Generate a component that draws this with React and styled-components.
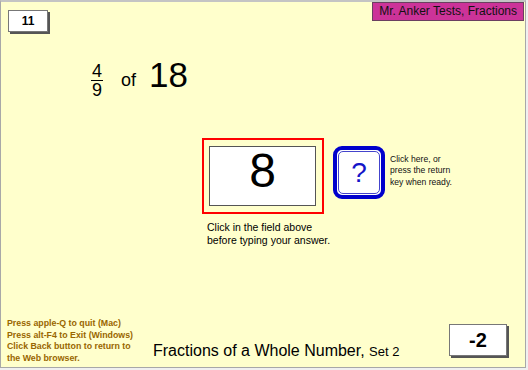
import React from "react";
import styled, { createGlobalStyle } from "styled-components";

const Global = createGlobalStyle`
  html, body { margin: 0; padding: 0; background: #f0f0f0; }
  body { font-family: "Liberation Sans", Arial, sans-serif; }
  * { box-sizing: border-box; }
`;

const Frame = styled.div`
  width: 526px;
  height: 368px;
  background: #ffffcc;
  border: 1px solid #a8a8a8;
  border-top: 2px solid #c4c4c4;
  display: flex;
  flex-direction: column;
  color: #000;
`;

const TopRow = styled.div`
  display: flex;
  justify-content: space-between;
  align-items: flex-start;
`;

const ScoreBox = styled.div`
  width: ${(p) => p.$w}px;
  height: ${(p) => p.$h}px;
  margin: ${(p) => p.$m};
  background: #fff;
  border: 1px solid #777;
  box-shadow: 2px 2px 0 #555;
  display: flex;
  align-items: center;
  justify-content: center;
  font-weight: bold;
  font-size: ${(p) => p.$fs}px;
`;

const Header = styled.div`
  margin-right: 1px;
  height: 19px;
  padding: 0 6px;
  background: #cc3399;
  border: 1px solid #6a4060;
  font-size: 12px;
  line-height: 17px;
  color: #111;
  white-space: nowrap;
`;

const Problem = styled.div`
  display: flex;
  align-items: flex-start;
  margin-top: 30px;
  padding-left: 90px;
`;

const Fraction = styled.div`
  display: flex;
  flex-direction: column;
  align-items: center;
  width: 12px;
  font-size: 18px;
  line-height: 18px;
`;

const Bar = styled.div`
  width: 12px;
  height: 1px;
  background: #000;
`;

const Of = styled.span`
  font-size: 18px;
  line-height: 18px;
  margin: 9px 0 0 18px;
`;

const Whole = styled.span`
  font-size: 35px;
  line-height: 35px;
  margin: -5px 0 0 13px;
`;

const AnswerRow = styled.div`
  display: flex;
  align-items: flex-start;
  margin-top: 39px;
  padding-left: 201px;
`;

const AnswerCol = styled.div`
  display: flex;
  flex-direction: column;
  width: 122px;
`;

const RedBox = styled.div`
  width: 122px;
  height: 76px;
  border: 2px solid #ff0000;
  padding: 6px 0 0 5px;
`;

const Field = styled.div`
  width: 107px;
  height: 60px;
  background: #fff;
  border: 1px solid #555;
  text-align: center;
  font-size: 48px;
  line-height: 48px;
`;

const Instruction = styled.div`
  margin: 7px 0 0 5px;
  font-size: 10.5px;
  line-height: 12.5px;
  white-space: nowrap;
`;

const CheckButton = styled.div`
  width: 52px;
  height: 53px;
  margin: 8px 0 0 9px;
  border: 4px solid #0000cc;
  border-radius: 9px;
  background: #fff;
  padding: 1px;
`;

const CheckInner = styled.div`
  width: 100%;
  height: 100%;
  border: 1px solid #4444cc;
  border-radius: 5px;
  display: flex;
  align-items: center;
  justify-content: center;
  color: #1515c8;
  font-size: 28px;
  line-height: 28px;
  padding-top: 1px;
`;

const Hint = styled.div`
  margin: 16px 0 0 5px;
  font-size: 8.6px;
  line-height: 11.3px;
  color: #111;
`;

const BottomRow = styled.div`
  margin-top: auto;
  display: flex;
  align-items: flex-end;
`;

const Help = styled.div`
  width: 152px;
  padding-left: 6px;
  margin-bottom: 3px;
  font-size: 8.8px;
  font-weight: bold;
  line-height: 11.5px;
  color: #996600;
  white-space: nowrap;
`;

const Title = styled.div`
  flex: 1;
  font-size: 16px;
  line-height: 18px;
  margin-bottom: 6px;
  white-space: nowrap;
`;

const Small = styled.span`
  font-size: 13px;
`;

export default function App() {
  return (
    <>
      <Global />
      <Frame>
        <TopRow>
          <ScoreBox $w={40} $h={22} $fs={12} $m="8px 0 0 7px">11</ScoreBox>
          <Header>Mr. Anker Tests, Fractions</Header>
        </TopRow>
        <Problem>
          <Fraction>
            <span>4</span>
            <Bar />
            <span>9</span>
          </Fraction>
          <Of>of</Of>
          <Whole>18</Whole>
        </Problem>
        <AnswerRow>
          <AnswerCol>
            <RedBox>
              <Field>8</Field>
            </RedBox>
            <Instruction>
              Click in the field above
              <br />
              before typing your answer.
            </Instruction>
          </AnswerCol>
          <CheckButton>
            <CheckInner>?</CheckInner>
          </CheckButton>
          <Hint>
            Click here, or
            <br />
            press the return
            <br />
            key when ready.
          </Hint>
        </AnswerRow>
        <BottomRow>
          <Help>
            Press apple-Q to quit (Mac)
            <br />
            Press alt-F4 to Exit (Windows)
            <br />
            Click Back button to return to
            <br />
            the Web browser.
          </Help>
          <Title>
            Fractions of a Whole Number, <Small>Set 2</Small>
          </Title>
          <ScoreBox $w={58} $h={32} $fs={20} $m="0 18px 11px 0">-2</ScoreBox>
        </BottomRow>
      </Frame>
    </>
  );
}
